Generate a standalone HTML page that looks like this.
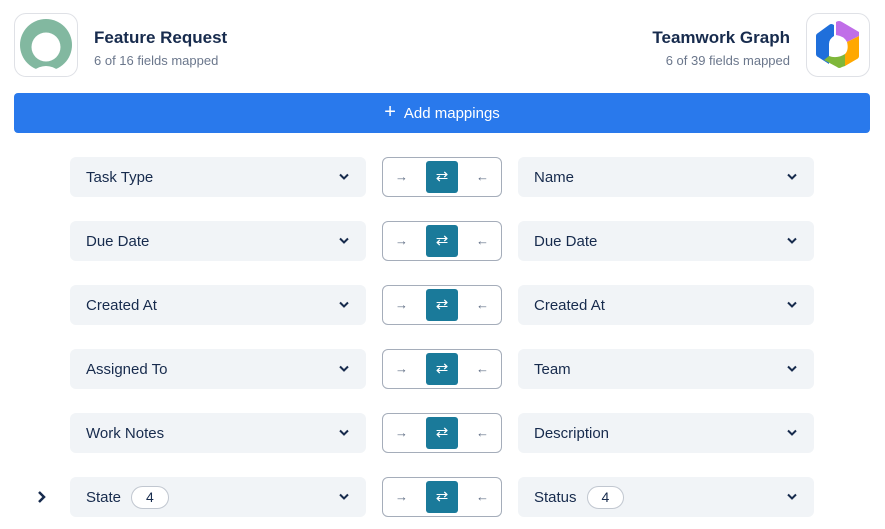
<!DOCTYPE html>
<html><head><style>
*{box-sizing:border-box;margin:0;padding:0}
body{width:885px;height:529px;background:#fff;font-family:"Liberation Sans",sans-serif;position:relative;overflow:hidden;color:#172b4d}
.logo{position:absolute;top:13px;width:64px;height:64px;border:1px solid #dfe1e6;border-radius:12px;background:#fff;overflow:hidden}
.t{position:absolute;font-size:17px;font-weight:bold;color:#172b4d}
.s{position:absolute;font-size:13px;color:#6b778c}
.btn{position:absolute;left:14px;top:93px;width:856px;height:40px;background:#2979ec;border-radius:4px;color:#fff;font-size:15px;display:flex;align-items:center;justify-content:center}
.sel{position:absolute;width:296px;height:40px;background:#f1f4f7;border-radius:6px;font-size:15px;color:#172b4d;display:flex;align-items:center;padding-left:16px}
.sel svg{position:absolute;right:16px;top:16px}
.tg{position:absolute;left:382px;width:120px;height:40px;border:1px solid #a5adba;border-radius:6px}
.tg .a,.tg .b{position:absolute;top:0;height:38px;line-height:38px;font-size:13px;color:#5e6c84}
.tg .a{left:12px}.tg .b{right:12px}
.tg .m{position:absolute;left:43px;top:3px;width:32px;height:32px;background:#1a7a9a;border-radius:3px;color:#fff;font-size:15px;text-align:center;line-height:32px}
.pill{display:inline-block;margin-left:10px;border:1px solid #c1c7d0;border-radius:12px;padding:0 14px;height:23px;line-height:21px;font-size:14px;background:#fff}
</style></head><body>
<div class="logo" style="left:14px">
<svg width="62" height="62" viewBox="0 0 62 62"><circle cx="31" cy="31" r="26" fill="#82b8a0"/><circle cx="31" cy="33" r="14.5" fill="#fff"/><path d="M0 62 L0 58 Q10 54 18 57 Q24 52 31 52 Q38 52 44 57 Q52 54 62 58 L62 62Z" fill="#fff"/></svg></div>
<div class="t" style="left:94px;top:28px">Feature Request</div>
<div class="s" style="left:94px;top:53px">6 of 16 fields mapped</div>
<div class="t" style="right:95px;top:28px">Teamwork Graph</div>
<div class="s" style="right:95px;top:53px">6 of 39 fields mapped</div>
<div class="logo" style="left:806px">
<svg width="62" height="62" viewBox="0 0 62 62">
<path d="M22 11 Q24 9 27 11 L27 22 Q22 25 22 30 V50 L11 43 Q9 42 9 40 V22 Q9 20 11 19Z" fill="#1f6fdb"/>
<path d="M29 8 Q32 6 35 8 L52 18 L52 22 L40 28 Q37 22 29 21Z" fill="#c06ee8"/>
<path d="M52 22 V42 Q52 44 50 45 L38 52 L38 40 Q42 36 40 28Z" fill="#ffa800"/>
<path d="M17 46 L30 53 Q32 55 35 53 L38 52 L38 40 Q30 45 22 42Z" fill="#7fb73a"/>
</svg></div>
<div class="btn"><span style="font-size:20px;margin-right:8px;margin-top:-2px">+</span>Add mappings</div>
<svg style="position:absolute;left:36px;top:490px" width="12" height="14" viewBox="0 0 12 14"><path d="M3 2 L8 7 L3 12" stroke="#172b4d" stroke-width="2.5" fill="none"/></svg>
<div id="rows"></div>
<script>
var L=["Task Type","Due Date","Created At","Assigned To","Work Notes","State"],R=["Name","Due Date","Created At","Team","Description","Status"];
var chev='<svg width="12" height="8" viewBox="0 0 12 8"><path d="M2 1.5 L6 5.5 L10 1.5" stroke="#172b4d" stroke-width="2" fill="none"/></svg>';
var h="";
for(var i=0;i<6;i++){var y=157+64*i;var p=i==5?'<span class="pill">4</span>':'';
h+='<div class="sel" style="left:70px;top:'+y+'px">'+L[i]+p+chev+'</div>';
h+='<div class="tg" style="top:'+y+'px"><span class="a">→</span><div class="m">⇄</div><span class="b">←</span></div>';
h+='<div class="sel" style="left:518px;top:'+y+'px">'+R[i]+p+chev+'</div>';}
document.getElementById("rows").innerHTML=h;
</script>
</body></html>
